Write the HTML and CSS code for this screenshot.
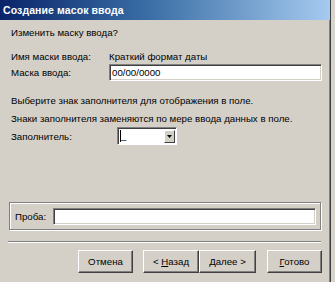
FILE: index.html
```html
<!DOCTYPE html>
<html lang="ru">
<head>
    <meta charset="UTF-8">
    <title>Создание масок ввода</title>
    <link rel="stylesheet" href="styles.css">
</head>
<body>
    <div class="dialog">
        <div class="titlebar">Создание масок ввода</div>

        <div class="content">
            <p class="question">Изменить маску ввода?</p>

            <div class="row name-row">
                <span class="label">Имя маски ввода:</span>
                <span>Краткий формат даты</span>
            </div>
            <div class="row mask-row">
                <span class="label">Маска ввода:</span>
                <div class="field mask-field">00/00/0000</div>
            </div>

            <p class="first-hint">Выберите знак заполнителя для отображения в поле.</p>
            <p class="second-hint">Знаки заполнителя заменяются по мере ввода данных в поле.</p>

            <div class="row fill-row">
                <span class="label fill-label">Заполнитель:</span>
                <div class="combo">
                    <div class="combo-text"><span class="caret">_</span></div>
                    <div class="combo-btn">
                        <svg width="5" height="3" viewBox="0 0 5 3"><path d="M0 0h5L2.5 3z" fill="#000"/></svg>
                    </div>
                </div>
            </div>

            <div class="probe">
                <span class="probe-label">Проба:</span>
                <div class="field probe-field"></div>
            </div>
        </div>

        <div class="separator"></div>

        <div class="buttons">
            <button class="btn-cancel">Отмена</button>
            <div class="btn-pair">
                <button class="btn-back">&lt; <u>Н</u>азад</button>
                <button class="btn-next"><u>Д</u>алее &gt;</button>
            </div>
            <button class="btn-done"><u>Г</u>отово</button>
        </div>
    </div>
</body>
</html>
```

FILE: styles.css
```css
body {
    margin: 0;
    background: #d8d5ce;
    font-family: "Liberation Sans", Arial, sans-serif;
    font-size: 9.7px;
    line-height: 11px;
    color: #000;
}

.dialog {
    width: 330px;
    height: 282px;
    background: #d4d0c8;
    border-right: 1px solid #404040;
    box-shadow: inset -1px 0 0 #808080;
    display: flex;
    flex-direction: column;
}

.titlebar {
    height: 20px;
    line-height: 20px;
    padding-left: 3px;
    color: #fff;
    font-weight: bold;
    font-size: 10.5px;
    letter-spacing: 0.1px;
    background: linear-gradient(90deg, #0a246a, #3a6ea5 45%, #a6caf0);
}

.content {
    padding: 0 8px 0 11px;
}

p {
    margin: 0;
}

.question {
    margin-top: 7px;
}

.row {
    display: flex;
    align-items: center;
}

.label {
    width: 98px;
    flex: none;
}

.name-row {
    margin-top: 13px;
}

.mask-row {
    margin-top: 2px;
}

.field {
    background: #fff;
    border-top: 1px solid #808080;
    border-left: 1px solid #808080;
    border-right: 1px solid #fff;
    border-bottom: 1px solid #fff;
    box-shadow: inset 1px 1px 0 #404040, inset -1px -1px 0 #d4d0c8;
    box-sizing: border-box;
}

.mask-field {
    flex: 1;
    height: 17px;
    line-height: 15px;
    padding-left: 2px;
}

.first-hint {
    margin-top: 14px;
}

.second-hint {
    margin-top: 7px;
}

.fill-row {
    margin-top: 3px;
}

.fill-label {
    width: 106px;
}

.combo {
    display: flex;
    width: 60px;
    height: 18px;
    background: #fff;
    border-top: 1px solid #808080;
    border-left: 1px solid #808080;
    border-right: 1px solid #fff;
    border-bottom: 1px solid #fff;
    box-shadow: inset 1px 1px 0 #404040;
    box-sizing: border-box;
}

.combo-text {
    flex: 1;
    padding: 2px 0 0 2px;
    line-height: 12px;
}

.caret {
    display: inline-block;
    border-left: 1px solid #000;
    padding-right: 3px;
    height: 12px;
}

.combo-btn {
    width: 11px;
    margin: 2px 1px 1px 0;
    background: #d4d0c8;
    border-top: 1px solid #fff;
    border-left: 1px solid #fff;
    border-right: 1px solid #404040;
    border-bottom: 1px solid #404040;
    box-sizing: border-box;
    display: flex;
    align-items: center;
    justify-content: center;
}

.probe {
    margin: 57px 1px 0 -2px;
    height: 28px;
    box-sizing: border-box;
    border: 1px solid #808080;
    box-shadow: 1px 1px 0 #fff, inset 1px 1px 0 #fff;
    display: flex;
    align-items: center;
    padding: 0 4px 0 5px;
}

.probe-label {
    width: 38px;
}

.probe-field {
    flex: 1;
    height: 17px;
}

.separator {
    margin: 11px 9px 0 8px;
    border-top: 1px solid #808080;
    border-bottom: 1px solid #fff;
}

.buttons {
    display: flex;
    justify-content: flex-end;
    gap: 10px;
    margin-top: 7px;
    padding-right: 8px;
}

.btn-pair {
    display: flex;
    margin-right: 1px;
}

button {
    width: 55px;
    height: 23px;
    padding: 0;
    font: inherit;
    color: #000;
    background: #d4d0c8;
    border-top: 1px solid #fff;
    border-left: 1px solid #fff;
    border-right: 1px solid #404040;
    border-bottom: 1px solid #404040;
    box-shadow: inset -1px -1px 0 #808080;
}

.btn-back {
    width: 56px;
}

.btn-next {
    width: 57px;
}
```
